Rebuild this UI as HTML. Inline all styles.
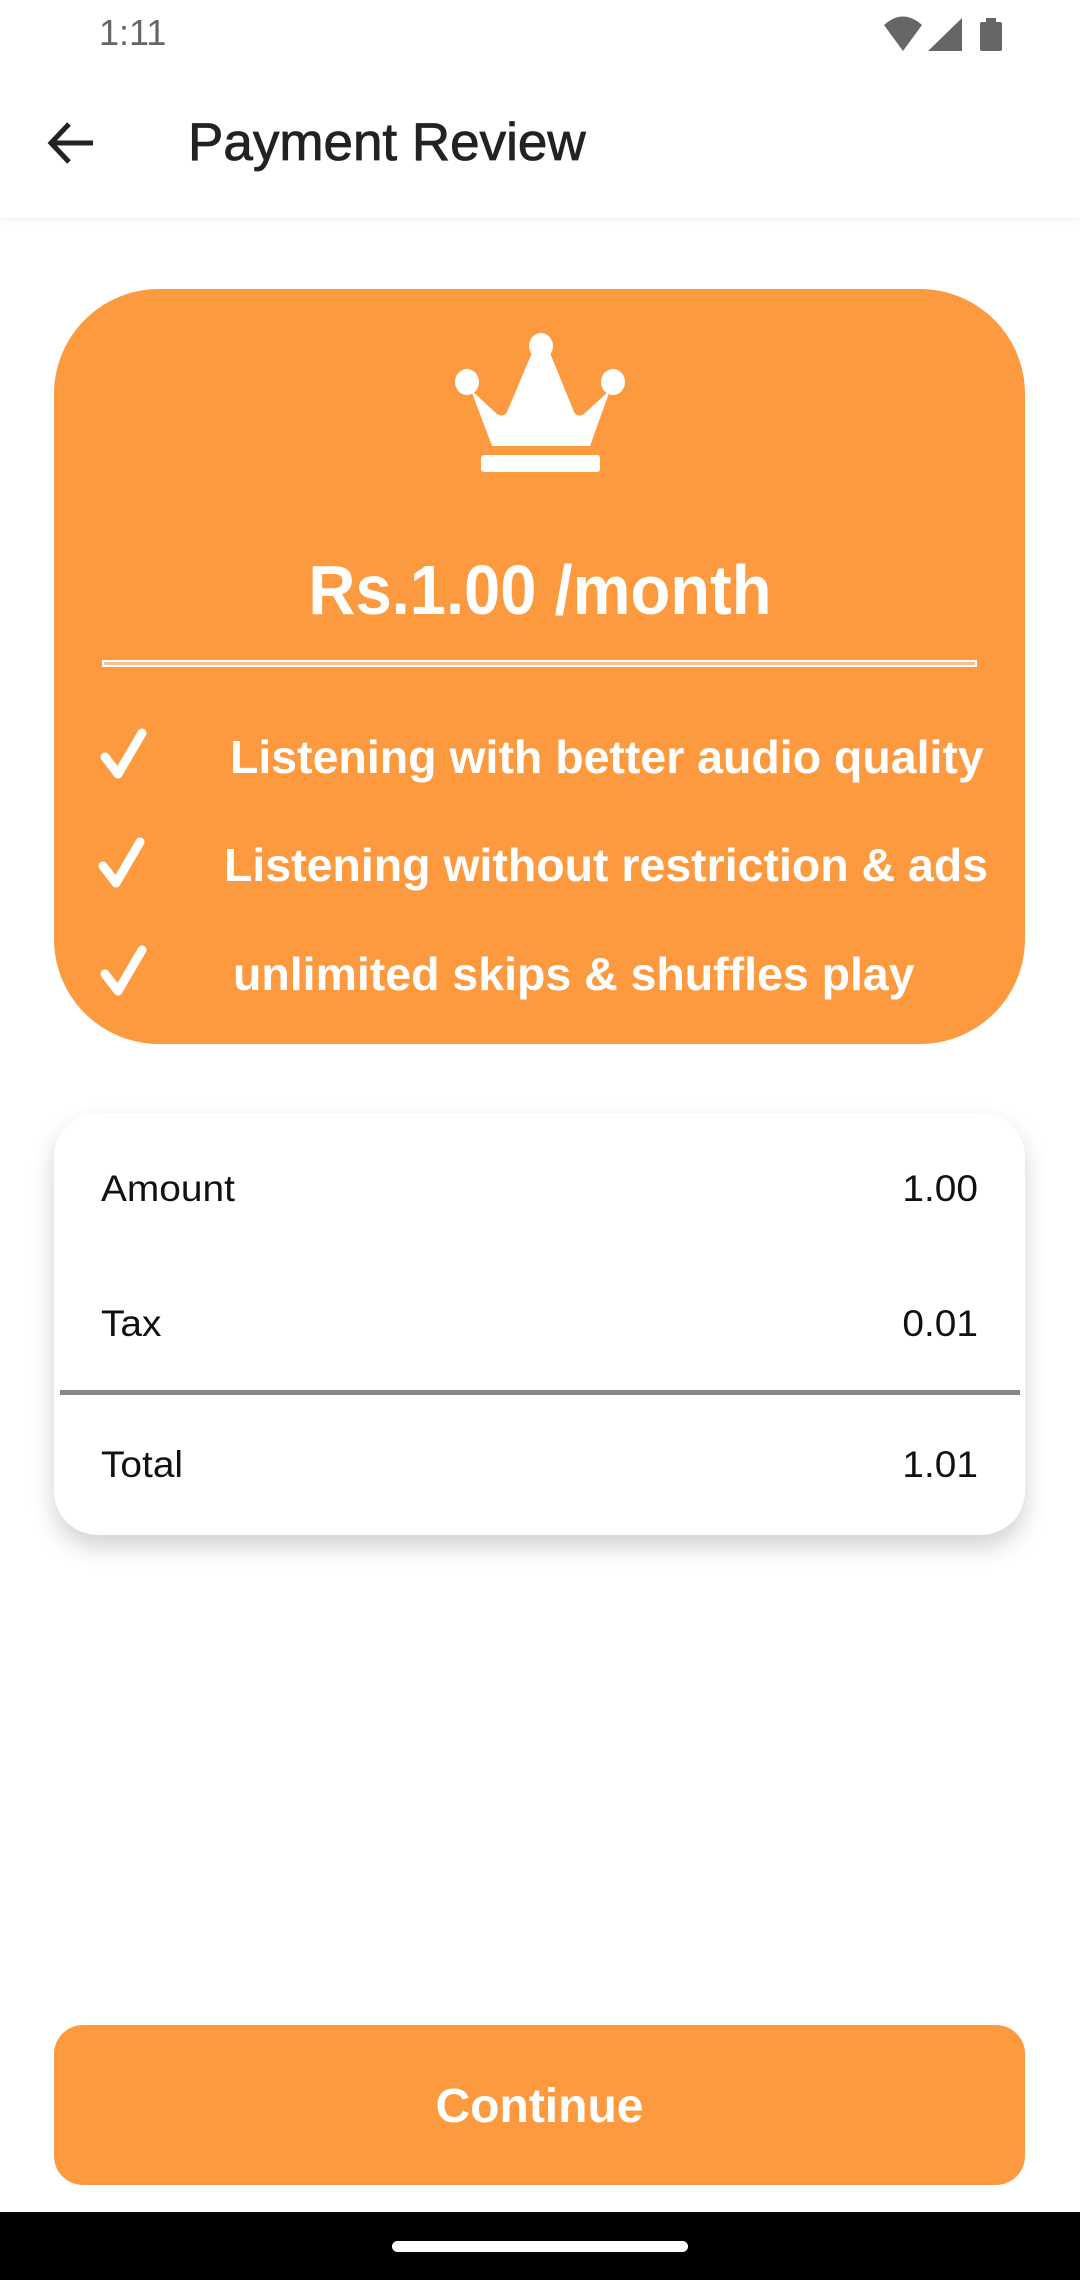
<!DOCTYPE html>
<html><head><meta charset="utf-8"><style>
*{margin:0;padding:0;box-sizing:border-box}
body{width:1080px;height:2280px;background:#fff;position:relative;overflow:hidden;font-family:"Liberation Sans",sans-serif}
.abs{position:absolute}
.time{left:99px;top:12px;font-size:36px;color:#666}
.appbar{left:0;top:0;width:1080px;height:218px;background:#fff;box-shadow:0 3px 6px rgba(0,0,0,0.05)}
.title{left:188px;top:112px;font-size:53px;color:#222;-webkit-text-stroke:0.8px #222;white-space:nowrap}
.card{left:54px;top:289px;width:971px;height:755px;background:#FD9A40;border-radius:105px}
.price{left:0;width:1080px;top:550px;text-align:center;font-size:70px;font-weight:bold;color:#fff}
.price span{display:inline-block;transform:scaleX(0.93)}
.line{left:102px;top:660px;width:875px;height:7px;border:2px solid #fff;background:#fdc08a}
.feat{font-size:46px;font-weight:bold;color:#fff;transform:scaleX(1.01);transform-origin:left;white-space:nowrap}
.box{left:54px;top:1113px;width:971px;height:422px;background:#fff;border-radius:44px;box-shadow:0 12px 24px rgba(0,0,0,0.18)}
.row{font-size:37px;color:#111;transform:scaleX(1.05);transform-origin:left}
.val{font-size:37px;color:#111;transform:scaleX(1.05);transform-origin:right;text-align:right;width:300px}
.btn{left:54px;top:2025px;width:971px;height:160px;background:#FD9A40;border-radius:29px;color:#fff;font-size:48px;font-weight:bold;text-align:center;line-height:164px}
.nav{left:0;top:2212px;width:1080px;height:68px;background:#000}
.handle{left:392px;top:2241px;width:296px;height:11px;border-radius:6px;background:#fff}
</style></head><body>
<div class="abs appbar"></div>
<div class="abs time">1:11</div>
<svg class="abs" style="left:880px;top:16px" width="130" height="40" viewBox="880 16 130 40">
<path d="M884 25 Q903 8 922 25 L903 51 Z" fill="#666"/>
<path d="M928 51 L962 18 L962 51 Z" fill="#666"/>
<rect x="980" y="22" width="22" height="29" rx="2" fill="#666"/><rect x="986" y="18" width="10" height="5" fill="#666"/>
</svg>
<svg class="abs" style="left:40px;top:115px" width="60" height="60" viewBox="40 115 60 60">
<path d="M93 143 H52 M69 124 L51 143 L69 162" stroke="#222" stroke-width="5" fill="none"/>
</svg>
<div class="abs title">Payment Review</div>
<div class="abs card"></div>
<svg class="abs" style="left:0;top:0" width="1080" height="700" viewBox="0 0 1080 700">
<g fill="#fff">
<ellipse cx="541" cy="346" rx="12" ry="13"/>
<ellipse cx="467" cy="382" rx="12" ry="13"/>
<ellipse cx="613" cy="382" rx="12" ry="13"/>
<path d="M471 390 L492 446 L590 446 L610 390 L584 414 Q578 418 574 412 L548 348 L534 348 L507 412 Q503 418 497 414 Z"/>
<rect x="481" y="455" width="119" height="17" rx="3"/>
</g>
</svg>
<div class="abs price"><span>Rs.1.00 /month</span></div>
<div class="abs line"></div>
<svg class="abs" style="left:0;top:0" width="1080" height="1100" viewBox="0 0 1080 1100">
<g stroke="#fff" stroke-width="9" fill="none" stroke-linecap="round" stroke-linejoin="round">
<path d="M105 757 L118 774 L142 733"/>
<path d="M103 866 L116 883 L140 842"/>
<path d="M105 974 L118 991 L142 950"/>
</g>
</svg>
<div class="abs feat" style="left:230px;top:730px">Listening with better audio quality</div>
<div class="abs feat" style="left:224px;top:838px">Listening without restriction &amp; ads</div>
<div class="abs feat" style="left:233px;top:947px">unlimited skips &amp; shuffles play</div>
<div class="abs box"></div>
<div class="abs row" style="left:101px;top:1168px">Amount</div>
<div class="abs val" style="left:678px;top:1168px">1.00</div>
<div class="abs row" style="left:101px;top:1303px">Tax</div>
<div class="abs val" style="left:678px;top:1303px">0.01</div>
<div class="abs" style="left:60px;top:1390px;width:960px;height:5px;background:#888"></div>
<div class="abs row" style="left:101px;top:1444px">Total</div>
<div class="abs val" style="left:678px;top:1444px">1.01</div>
<div class="abs btn">Continue</div>
<div class="abs nav"></div>
<div class="abs handle"></div>
</body></html>
